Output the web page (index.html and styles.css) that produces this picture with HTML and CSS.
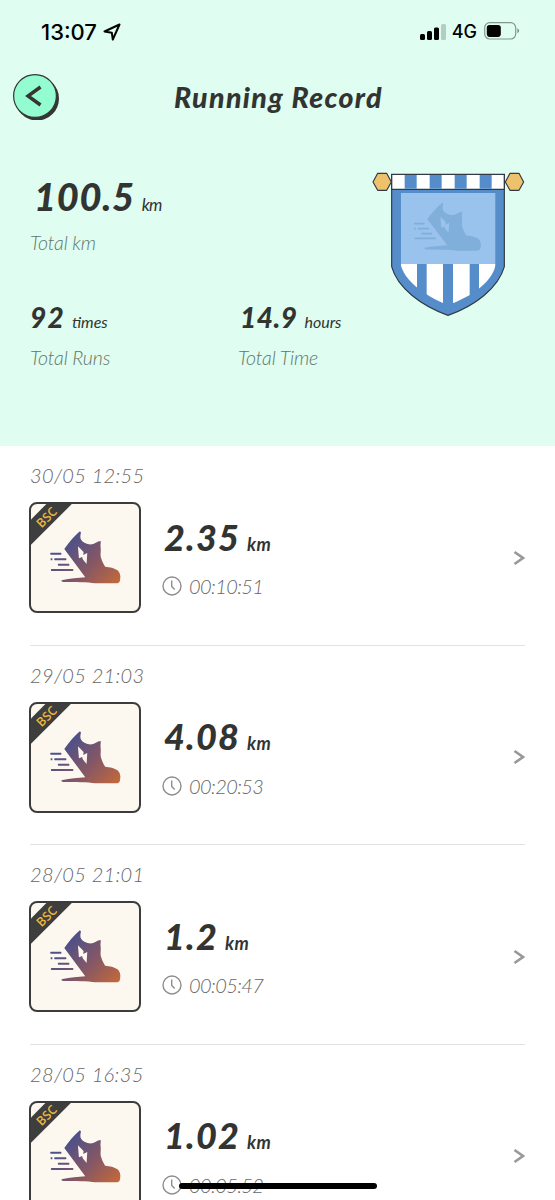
FILE: index.html
```html
<!DOCTYPE html>
<html lang="en">
<head>
<meta charset="utf-8">
<title>Running Record</title>
<link rel="stylesheet" href="styles.css">
</head>
<body>
<svg class="defs" aria-hidden="true">
  <defs>
    <linearGradient id="sunset" gradientUnits="userSpaceOnUse" x1="155" y1="130" x2="295" y2="262">
      <stop offset="0" stop-color="#4d5089"/><stop offset=".5" stop-color="#845765"/><stop offset="1" stop-color="#c2683c"/>
    </linearGradient>
    <g id="shoe">
      <path fill-rule="evenodd" d="M179 109Q183 109 183 113C181 121 180 130 184 135C190 143 202 150 217 148C227 146 231 139 242 138C244 142 241 148 242 155C244 170 240 180 244 190C247 200 251 208 256 215C270 216 284 219 293 226C302 234 303 246 300 258C298 264 294 265 286 265H225C205 261 165 262 130 261C123 260 122 256 128 255C150 250 175 249 196 247L133 162C146 142 163 123 179 109ZM174 154L191 171L190 180L202 174L200 207L188 192L187 186L177 190Z"/>
      <path d="M92 173.500h31q3 3 0 6H92q-3-3 0-6zM92 190h5v6h-5zM104 190h34q3 3 0 6h-34q-3-3 0-6zM115 206h32q3 3 0 6h-32q-3-3 0-6zM94 222h65q3 3 0 6H94q-3-3 0-6z"/>
    </g>
    <symbol id="clock" viewBox="0 0 20 20"><circle cx="10" cy="10" r="9" fill="none" stroke="#8e8e8e" stroke-width="1.400"/><path d="M9.700 4.500v6l3 3" fill="none" stroke="#8e8e8e" stroke-width="1.400"/></symbol>
    <symbol id="chevron" viewBox="0 0 12 16"><path d="M1.500 2L10 8L1.500 14" fill="none" stroke="#999" stroke-width="2.700"/></symbol>
  </defs>
</svg>
<main class="screen">
  <section class="hero">
    <div class="status">
      <span class="clock-time">13:07</span>
      <svg class="locate" viewBox="0 0 18 18"><path d="M1.500 8.500L16.500 1.500L9.800 16.500L8.800 9.700Z" fill="none" stroke="#000" stroke-width="2" stroke-linejoin="round"/></svg>
      <svg class="signal" viewBox="0 0 26 17"><rect x="0" y="11" width="5" height="6" rx="1.500"/><rect x="7" y="8" width="5" height="9" rx="1.500"/><rect x="14" y="4.500" width="5" height="12.500" rx="1.500"/><rect x="21" y="1" width="5" height="16" rx="1.500" fill="#b4cdc1"/></svg>
      <span class="network">4G</span>
      <svg class="battery" viewBox="0 0 36 18"><rect x=".7" y=".7" width="31" height="16.300" rx="5" fill="none" stroke="#83978d" stroke-width="1.200"/><rect x="2.800" y="2.900" width="14" height="12" rx="2.800"/><path d="M33.500 6.200Q36.500 8.500 33.500 11.500Z" fill="#677b70"/></svg>
    </div>
    <header class="titlebar">
      <button class="back" aria-label="Back"><svg viewBox="0 0 46 46"><circle cx="24" cy="24.500" r="22" fill="#343634"/><circle cx="22" cy="22" r="21.400" fill="#93fcd1" stroke="#343634" stroke-width="1.200"/><path d="M27.500 13L15 22L27.500 31" fill="none" stroke="#343634" stroke-width="3.400"/></svg></button>
      <h1 class="title">Running Record</h1>
    </header>
    <div class="summary">
      <div class="stats">
        <div class="stat total">
          <div class="figure"><b class="value">100.5</b><span class="unit">km</span></div>
          <div class="label">Total km</div>
        </div>
        <div class="stat runs">
          <div class="figure"><b class="value">92</b><span class="unit">times</span></div>
          <div class="label">Total Runs</div>
        </div>
        <div class="stat time">
          <div class="figure"><b class="value">14.9</b><span class="unit">hours</span></div>
          <div class="label time-label">Total Time</div>
        </div>
      </div>
      <svg class="pennant" viewBox="36 36 459 435">
        <clipPath id="inner"><path d="M122 99H407V314C400 352 360 390 318 411Q290 427 263 435Q220 418 194 399C155 373 130 345 122 314Z"/></clipPath>
        <path d="M95 86H433V320C415 384 345 438 264 466C185 438 112 384 95 320Z" fill="#558dcb" stroke="#343a43" stroke-width="3.500"/>
        <g clip-path="url(#inner)"><path fill="#99c2ec" d="M122 99h285v213H122z"/><path fill="#fff" d="M122 312h49v125h-49zM200 312h49v125h-49zM279 312h50v125h-50zM357 312h50v125h-50z"/></g>
        <use href="#shoe" fill="#80afdb" transform="translate(75.200 29)scale(.953 .917)"/>
        <path fill="#fff" stroke="#343a43" stroke-width="4" d="M95 43h338v45H95z"/>
        <path fill="#558dcb" d="M134 45h36v41h-36zM209 45h36v41h-36zM284 45h36v41h-36zM359 45h36v41h-36z"/>
        <path fill="#eec16d" stroke="#343a43" stroke-width="3.500" stroke-linejoin="round" d="M39 66L53 40H80L94 66L80 91H53ZM436 66L450 40H477L491 66L477 91H450Z"/>
      </svg>
    </div>
  </section>
  <section class="runs-list">
    <article class="run">
      <div class="date">30/05 12:55</div>
      <div class="row">
        <div class="card"><div class="ribbon">BSC</div><svg class="sneaker" viewBox="90 105 215 165"><use href="#shoe" fill="url(#sunset)"/></svg></div>
        <div class="info"><div class="distance"><b class="km-value">2.35</b><b class="km">km</b></div><div class="duration"><svg class="clock"><use href="#clock"/></svg><span>00:10:51</span></div></div>
        <svg class="chevron"><use href="#chevron"/></svg>
      </div>
    </article>
    <article class="run">
      <div class="date">29/05 21:03</div>
      <div class="row">
        <div class="card"><div class="ribbon">BSC</div><svg class="sneaker" viewBox="90 105 215 165"><use href="#shoe" fill="url(#sunset)"/></svg></div>
        <div class="info"><div class="distance"><b class="km-value">4.08</b><b class="km">km</b></div><div class="duration"><svg class="clock"><use href="#clock"/></svg><span>00:20:53</span></div></div>
        <svg class="chevron"><use href="#chevron"/></svg>
      </div>
    </article>
    <article class="run">
      <div class="date">28/05 21:01</div>
      <div class="row">
        <div class="card"><div class="ribbon">BSC</div><svg class="sneaker" viewBox="90 105 215 165"><use href="#shoe" fill="url(#sunset)"/></svg></div>
        <div class="info"><div class="distance"><b class="km-value">1.2</b><b class="km">km</b></div><div class="duration"><svg class="clock"><use href="#clock"/></svg><span>00:05:47</span></div></div>
        <svg class="chevron"><use href="#chevron"/></svg>
      </div>
    </article>
    <article class="run">
      <div class="date">28/05 16:35</div>
      <div class="row">
        <div class="card"><div class="ribbon">BSC</div><svg class="sneaker" viewBox="90 105 215 165"><use href="#shoe" fill="url(#sunset)"/></svg></div>
        <div class="info"><div class="distance"><b class="km-value">1.02</b><b class="km">km</b></div><div class="duration"><svg class="clock"><use href="#clock"/></svg><span>00:05:52</span></div></div>
        <svg class="chevron"><use href="#chevron"/></svg>
      </div>
    </article>
  </section>
  <div class="home-indicator"></div>
</main>
</body>
</html>
```
FILE: styles.css
```css
* { box-sizing: border-box; }
body { margin: 0; background: #fff; }
.defs { position: absolute; width: 0; height: 0; }
.screen { position: relative; width: 555px; height: 1200px; overflow: hidden; background: #fff; font-family: Lato, sans-serif; font-style: italic; color: #323432; }
.hero { height: 446px; background: #dffdf0; }

.status { display: flex; align-items: center; height: 64px; padding: 0 35px 0 41px; font-family: Inter, sans-serif; font-style: normal; color: #000; }
.clock-time { font-size: 22px; font-weight: 500; line-height: 26px; letter-spacing: 0; }
.locate { width: 18px; height: 18px; margin-left: 6px; }
.signal { width: 26px; height: 17px; margin: 0 0 2px auto; }
.network { margin-left: 6px; font-size: 18px; font-weight: 500; line-height: 22px; }
.battery { width: 36px; height: 18px; margin: 0 0 2px 7px; }

.titlebar { display: grid; grid-template-columns: 61px 1fr 61px; align-items: center; height: 66px; }
.back { width: 46px; height: 46px; margin-left: 13px; padding: 0; border: 0; background: none; }
.back svg { display: block; width: 46px; height: 46px; }
.title { margin: 0; padding-left: 2px; text-align: center; font-size: 28.500px; font-weight: 900; line-height: 32px; letter-spacing: 1.350px; white-space: nowrap; }

.summary { display: flex; justify-content: space-between; padding: 42px 30px 0 30px; }
.stats { display: grid; grid-template-columns: 208px 120px; grid-template-rows: 125px 70px; }
.total { grid-column: 1 / 3; }
.figure { display: flex; align-items: baseline; gap: 7px; height: 48px; line-height: 48px; }
.value { font-size: 28px; font-weight: 900; letter-spacing: .8px; }
.unit { font-size: 16px; letter-spacing: 0; }
.total .value { padding-left: 4px; font-size: 38px; letter-spacing: .7px; }
.total .unit { font-size: 17px; letter-spacing: -.8px; }
.runs .figure, .time .figure { height: 41px; line-height: 41px; }
.runs .value { letter-spacing: 1.200px; }
.time .figure { padding-left: 2px; }
.time .value { letter-spacing: .5px; }
.label { font-size: 19.500px; font-weight: 300; line-height: 40px; letter-spacing: -.15px; color: #5f766a; }
.total .label { margin-top: 3px; }
.pennant { width: 153px; height: 145px; flex: none; }

.runs-list { padding: 0 30px; }
.run { height: 199.500px; padding-top: 14px; border-bottom: 1.500px solid #e2e2e2; }
.date { height: 42px; font-size: 20px; font-weight: 300; line-height: 30px; letter-spacing: .35px; color: #666; }
.row { display: flex; align-items: center; height: 111px; }
.card { position: relative; display: flex; align-items: center; justify-content: center; flex: none; width: 111.500px; height: 111px; margin-left: -1px; padding-left: 2px; overflow: hidden; border: 2px solid #3c3c3c; border-radius: 8px; background: #fcf8f0; }
.sneaker { width: 71.500px; height: 55px; }
.ribbon { position: absolute; left: -33.500px; top: 3.500px; width: 96px; height: 17.500px; transform: rotate(-45deg); background: #3e3e3e; color: #e9b73e; text-align: center; font: 600 12.500px/19px "Open Sans", sans-serif; }
.info { padding-top: 7px; margin-left: 21.500px; }
.distance { display: flex; align-items: baseline; gap: 7px; height: 50px; padding-left: 2px; line-height: 49px; }
.km-value { font-size: 36px; font-weight: 900; letter-spacing: 1.200px; }
.km { font-size: 18px; font-weight: 700; letter-spacing: .4px; }
.duration { display: flex; align-items: center; gap: 7px; height: 47px; font-size: 20px; font-weight: 300; letter-spacing: -.6px; color: #666; }
.clock { width: 20px; height: 20px; }
.chevron { width: 12px; height: 16px; margin-left: auto; }
.home-indicator { position: absolute; left: 179px; top: 1183px; width: 198px; height: 6px; border-radius: 3px; background: #000; }
```
